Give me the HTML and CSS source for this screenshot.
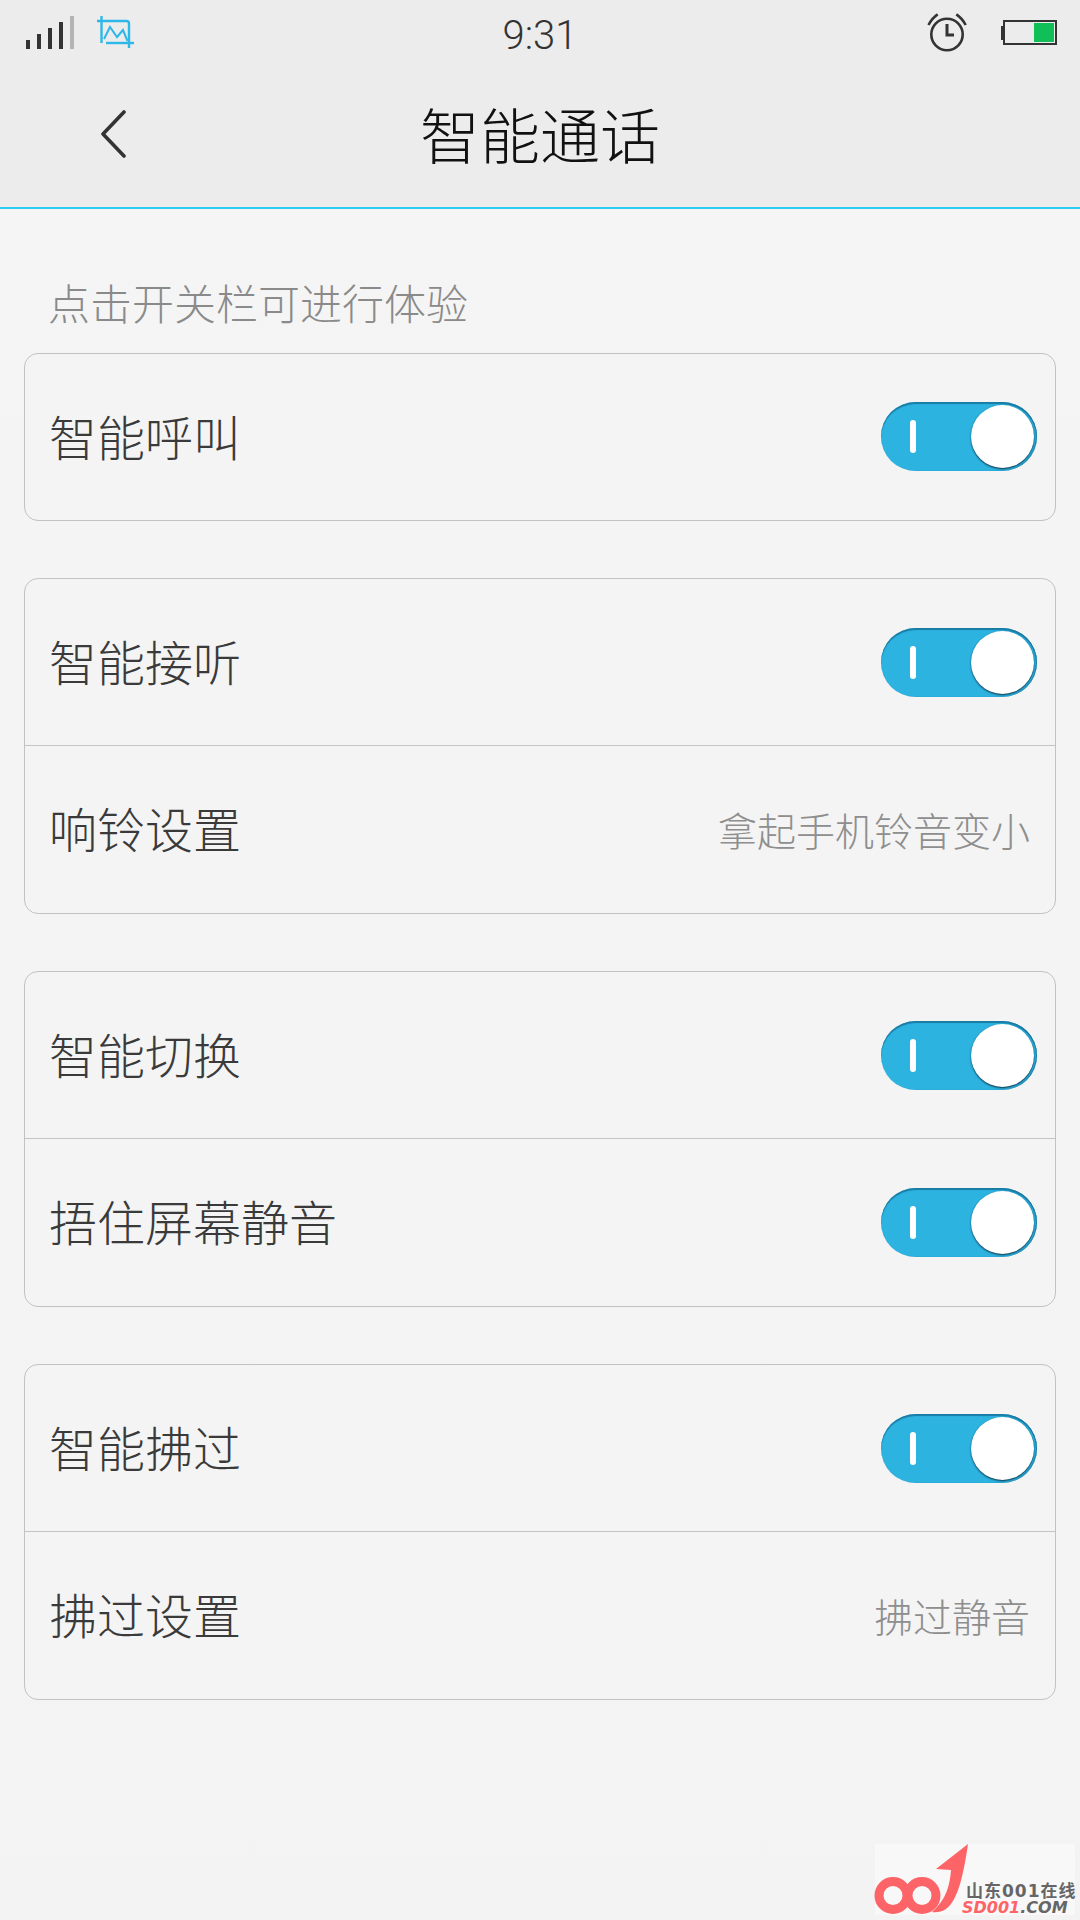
FILE: index.html
```html
<!DOCTYPE html>
<html lang="zh-CN">

<head>
  <meta charset="UTF-8">
  <meta name="viewport" content="width=device-width, initial-scale=1.0">
  <title>智能通话</title>
  <link rel="stylesheet" href="styles.css">
</head>

<body>
  <div class="page">
    <header class="topbar">
      <div class="status">
        <div class="status-left">
          <div class="signal">
            <span class="bar bar1"></span>
            <span class="bar bar2"></span>
            <span class="bar bar3"></span>
            <span class="bar bar4"></span>
            <span class="bar bar5"></span>
          </div>
          <svg class="crop-icon" width="38" height="34" viewBox="0 0 38 34" fill="none" stroke="#2db8e8" stroke-width="2.4">
            <path d="M0 5H29.500a2.500 2.500 0 0 1 2.500 2.500V32" />
            <path d="M4.500 0V27" />
            <path d="M9 27H37" />
            <path d="M7 23L13 11L20 21L26 14L30.500 25" stroke-width="2" />
          </svg>
        </div>
        <div class="clock">9:31</div>
        <div class="status-right">
          <svg class="alarm-icon" width="42" height="40" viewBox="0 0 42 40" fill="none" stroke="#333" stroke-width="2.600">
            <circle cx="21" cy="21.500" r="15.700" />
            <path d="M21 11V22H28" stroke-width="3" />
            <path d="M2.500 12Q6 5 11.700 1.300" />
            <path d="M39.700 12Q36 5 30.300 1.300" />
          </svg>
          <div class="battery">
            <span class="battery-nub"></span>
            <div class="battery-body"><span class="battery-fill"></span></div>
          </div>
        </div>
      </div>
      <div class="titlebar">
        <svg class="back-icon" width="26" height="50" viewBox="0 0 26 50" fill="none" stroke="#333" stroke-width="3.600" stroke-linecap="round" stroke-linejoin="round">
          <path d="M23 2L2 24L23 46" />
        </svg>
        <h1>智能通话</h1>
      </div>
    </header>

    <main class="content">
      <p class="hint">点击开关栏可进行体验</p>

      <section class="card">
        <div class="row">
          <span class="label">智能呼叫</span>
          <div class="toggle"><span class="toggle-mark"></span><span class="toggle-knob"></span></div>
        </div>
      </section>

      <section class="card">
        <div class="row">
          <span class="label">智能接听</span>
          <div class="toggle"><span class="toggle-mark"></span><span class="toggle-knob"></span></div>
        </div>
        <div class="row">
          <span class="label">响铃设置</span>
          <span class="value">拿起手机铃音变小</span>
        </div>
      </section>

      <section class="card">
        <div class="row">
          <span class="label">智能切换</span>
          <div class="toggle"><span class="toggle-mark"></span><span class="toggle-knob"></span></div>
        </div>
        <div class="row">
          <span class="label">捂住屏幕静音</span>
          <div class="toggle"><span class="toggle-mark"></span><span class="toggle-knob"></span></div>
        </div>
      </section>

      <section class="card">
        <div class="row">
          <span class="label">智能拂过</span>
          <div class="toggle"><span class="toggle-mark"></span><span class="toggle-knob"></span></div>
        </div>
        <div class="row">
          <span class="label">拂过设置</span>
          <span class="value">拂过静音</span>
        </div>
      </section>
    </main>

    <!-- watermark -->
    <div class="watermark">
      <svg class="wm-logo" width="87" height="71" viewBox="875 1844 87 71">
        <circle cx="893" cy="1895.500" r="14" fill="none" stroke="#fd6468" stroke-width="9" />
        <circle cx="922" cy="1895.500" r="14" fill="none" stroke="#fd6468" stroke-width="9" />
        <path d="M968 1844L936 1869L951 1870C950 1885 946 1900 932 1912C950 1914 960 1900 968 1844Z" fill="#fd6468" />
      </svg>
      <div class="wm-text">
        <div class="wm-cn">山东001在线</div>
        <div class="wm-en"><span class="wm-red">SD001</span>.COM</div>
      </div>
    </div>
  </div>
</body>

</html>
```

FILE: styles.css
```css
* {
  margin: 0;
  padding: 0;
  box-sizing: border-box;
}

body {
  font-family: "Noto Sans CJK SC", "Noto Sans", sans-serif;
  font-weight: 300;
  background-color: #f4f4f4;
}

.page {
  position: relative;
  width: 1080px;
  height: 1920px;
  overflow: hidden;
  background: linear-gradient(#f5f5f5, #f3f3f3);
}

/* top bar */
.topbar {
  height: 209px;
  background-color: #ececec;
  border-bottom: 2px solid #29cdf0;
}

.status {
  display: flex;
  align-items: flex-start;
  justify-content: space-between;
  height: 66px;
  position: relative;
}

.status-left {
  display: flex;
  align-items: flex-start;
  padding: 16px 0 0 26px;
}

.signal {
  display: flex;
  align-items: flex-end;
  gap: 7px;
  height: 33px;
}

.bar {
  width: 4px;
  background-color: #333;
}

.bar1 { height: 9px; }
.bar2 { height: 15px; }
.bar3 { height: 21px; }
.bar4 { height: 27px; }
.bar5 { height: 33px; background-color: #b4b4b4; }

.crop-icon {
  margin-left: 23px;
}

.clock {
  position: absolute;
  left: 0;
  right: 0;
  top: 11px;
  text-align: center;
  font-family: Roboto, sans-serif;
  font-weight: 300;
  font-size: 40px;
  line-height: 50px;
  color: #333;
}

.status-right {
  display: flex;
  align-items: flex-start;
  padding: 13px 23px 0 0;
}

.alarm-icon {
  margin-right: 33px;
}

.battery {
  display: flex;
  align-items: center;
  height: 25px;
  margin-top: 7px;
}

.battery-nub {
  width: 2px;
  height: 14px;
  background-color: #333;
}

.battery-body {
  display: flex;
  justify-content: flex-end;
  width: 54px;
  height: 25px;
  padding: 1px;
  border: 2px solid #333;
}

.battery-fill {
  width: 20px;
  height: 100%;
  background-color: #10bf58;
}

.titlebar {
  display: flex;
  align-items: center;
  justify-content: center;
  position: relative;
  height: 141px;
}

.titlebar h1 {
  margin-bottom: 8px;
  font-size: 60px;
  font-weight: 300;
  color: #111;
}

.back-icon {
  position: absolute;
  left: 101px;
  top: 44px;
}

/* settings list */
.content {
  padding: 0 24px;
}

.hint {
  height: 144px;
  padding: 63px 0 0 24px;
  font-size: 42px;
  line-height: 60px;
  color: #8a8a8a;
}

.card {
  margin-bottom: 57px;
  background-color: #f4f4f4;
  border: 1px solid #c2c2c2;
  border-radius: 14px;
}

.row {
  display: flex;
  align-items: center;
  justify-content: space-between;
  height: 166px;
  padding: 0 18px 0 24px;
}

.row + .row {
  border-top: 1px solid #c4c4c4;
  height: 168px;
}

.label {
  margin-bottom: 5px;
  font-size: 48px;
  color: #3a3a3a;
}

.value {
  margin-bottom: 2px;
  padding-right: 7px;
  font-size: 39px;
  color: #8e8e8e;
}

/* switch */
.toggle {
  position: relative;
  width: 156px;
  height: 69px;
  border-radius: 35px;
  background-color: #2db3e0;
  box-shadow: inset 0 2px 1px rgba(20, 110, 150, 0.8), inset -1px 0 1px rgba(20, 110, 150, 0.7);
}

.row:only-child .toggle {
  margin-top: -1px;
}

.toggle-mark {
  position: absolute;
  left: 29px;
  top: 18px;
  width: 6px;
  height: 33px;
  border-radius: 3px;
  background-color: #fff;
}

.toggle-knob {
  position: absolute;
  right: 3px;
  top: 3px;
  width: 63px;
  height: 63px;
  border-radius: 50%;
  background-color: #fff;
  box-shadow: 0 1px 2px rgba(0, 30, 50, 0.9);
}

/* watermark */
.watermark {
  position: absolute;
  left: 875px;
  top: 1844px;
  display: flex;
  width: 200px;
  height: 71px;
  background-color: #f8f8f8;
}

.wm-logo {
  flex-shrink: 0;
  overflow: visible;
}

.wm-text {
  padding-top: 38px;
}

.wm-cn {
  padding-left: 4px;
  font-family: "DejaVu Sans", "Noto Sans CJK SC", sans-serif;
  font-size: 17px;
  font-weight: 700;
  line-height: 18px;
  letter-spacing: 1px;
  white-space: nowrap;
  color: #666;
}

.wm-en {
  font-family: "DejaVu Sans", sans-serif;
  font-size: 16px;
  font-weight: 700;
  font-style: italic;
  line-height: 15px;
  white-space: nowrap;
  color: #666;
}

.wm-red {
  color: #fd6468;
}
```
